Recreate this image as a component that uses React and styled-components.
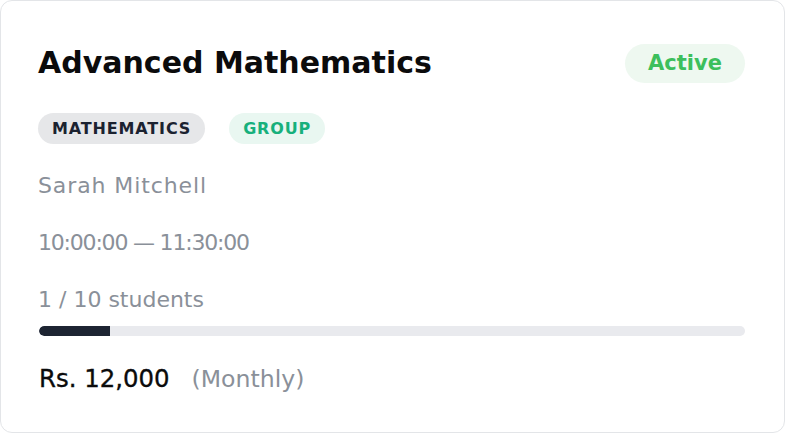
import React from "react";
import styled, { createGlobalStyle } from "styled-components";

const Global = createGlobalStyle`
  html, body { margin: 0; padding: 0; background: #ffffff; }
  body { font-family: "DejaVu Sans", "Noto Sans", sans-serif; }
  * { box-sizing: border-box; }
`;

const Card = styled.div`
  width: 785px;
  height: 433px;
  background: #fff;
  border: 1px solid #e3e5e8;
  border-radius: 12px;
  padding: 42px 39px 0 37px;
  display: flex;
  flex-direction: column;
`;

const Header = styled.div`
  display: flex;
  align-items: center;
  justify-content: space-between;
  height: 40px;
`;

const Title = styled.h2`
  margin: 0;
  font-size: 30px;
  line-height: 40px;
  font-weight: 700;
  color: #0b0b0c;
`;

const Status = styled.span`
  display: inline-flex;
  align-items: center;
  justify-content: center;
  height: 39px;
  width: 120px;
  border-radius: 20px;
  background: #eef8f0;
  color: #3cbf5c;
  font-size: 21px;
  font-weight: 700;
`;

const Tags = styled.div`
  display: flex;
  gap: 24px;
  margin-top: 30px;
`;

const Tag = styled.span`
  display: inline-flex;
  align-items: center;
  height: 31px;
  padding: 0 14px;
  border-radius: 16px;
  font-size: 16px;
  font-weight: 700;
  letter-spacing: 0.85px;
  text-transform: uppercase;
  background: ${(p) => (p.$tone === "green" ? "#e9f7f1" : "#e6e7e9")};
  color: ${(p) => (p.$tone === "green" ? "#17b07c" : "#1b2230")};
`;

const Info = styled.div`
  font-size: 22px;
  line-height: 30px;
  color: #8a9099;
  white-space: nowrap;
  letter-spacing: ${(p) => p.$ls || 0}px;
  margin-top: ${(p) => p.$mt}px;
`;

const Track = styled.div`
  height: 10px;
  border-radius: 5px;
  background: #e9eaee;
  margin-top: 11px;
  margin-left: 1px;
  overflow: hidden;
`;

const Fill = styled.div`
  height: 100%;
  background: #1d2432;
  border-radius: 5px 0 0 5px;
`;

const PriceRow = styled.div`
  display: flex;
  align-items: baseline;
  gap: 22px;
  margin-top: 28px;
  line-height: 30px;
  padding-left: 1px;
`;

const Price = styled.span`
  font-size: 24.4px;
  color: #0b0b0c;
  -webkit-text-stroke: 0.35px #0b0b0c;
`;

const Period = styled.span`
  font-size: 23.6px;
  color: #8a9099;
`;

export default function App() {
  const enrolled = 1;
  const capacity = 10;
  return (
    <>
      <Global />
      <Card>
        <Header>
          <Title>Advanced Mathematics</Title>
          <Status>Active</Status>
        </Header>
        <Tags>
          <Tag>Mathematics</Tag>
          <Tag $tone="green">Group</Tag>
        </Tags>
        <Info $mt={27} $ls={0.9}>Sarah Mitchell</Info>
        <Info $mt={27} $ls={-1.2}>10:00:00 — 11:30:00</Info>
        <Info $mt={27}>{enrolled} / {capacity} students</Info>
        <Track>
          <Fill style={{ width: `${(enrolled / capacity) * 100}%` }} />
        </Track>
        <PriceRow>
          <Price>Rs. 12,000</Price>
          <Period>(Monthly)</Period>
        </PriceRow>
      </Card>
    </>
  );
}
